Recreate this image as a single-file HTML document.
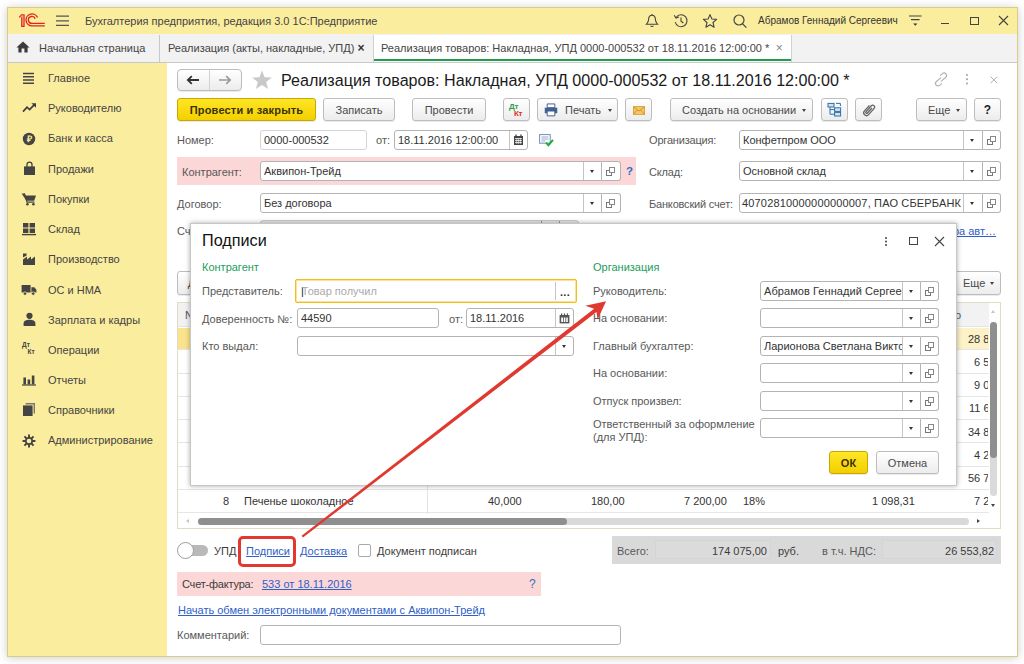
<!DOCTYPE html>
<html lang="ru"><head><meta charset="utf-8"><title>1С:Предприятие</title>
<style>
*{box-sizing:border-box;margin:0;padding:0}
html,body{width:1024px;height:664px;overflow:hidden;background:#fff}
body{font-family:"Liberation Sans",Arial,sans-serif;font-size:11px;color:#3c3c3c;position:relative}
.a{position:absolute;white-space:nowrap}
.t{position:absolute;white-space:nowrap;line-height:14px;height:14px}
#win{left:7px;top:7px;width:1011px;height:650px;border:1px solid #d9cd85;background:#fff;box-shadow:0 1px 9px rgba(0,0,0,.2)}
#titlebar{left:8px;top:8px;width:1009px;height:26px;background:#fbed9e}
#tabs{left:8px;top:34px;width:1009px;height:29px;background:#f2f2f2;border-bottom:1px solid #c8c8c8}
#side{left:8px;top:63px;width:159px;height:593px;background:#fbed9e}
.inp{position:absolute;background:#fff;border:1px solid #b4b4b4;border-radius:3px;height:20px;line-height:18px;padding-left:3px;white-space:nowrap;overflow:hidden;color:#333}
.btn{position:absolute;border:1px solid #bdbdbd;border-radius:3px;background:linear-gradient(#ffffff,#ececec);height:24px;line-height:22px;text-align:center;white-space:nowrap;box-shadow:0 1px 0 rgba(0,0,0,.08);color:#4a4a4a}
.ybtn{background:linear-gradient(#ffe626,#f3cf00);border-color:#c7a800;font-weight:bold;color:#3a3200}
.lnk{color:#2f60c8;text-decoration:underline}
.sb{position:absolute;left:40px;line-height:14px;white-space:nowrap;color:#444}
.dd{position:absolute;top:0;bottom:0;border-left:1px solid #c4c4c4;width:18px}
.dd:after{content:"";position:absolute;left:5.5px;top:8px;border:2.5px solid transparent;border-top:3px solid #333;border-bottom:0}
.ob{position:absolute;border:1px solid #b4b4b4;border-left:0;border-radius:0 3px 3px 0;background:#fff;width:19px;height:20px}
.ob:before{content:"";position:absolute;left:4px;top:8px;width:4px;height:4px;border:1px solid #777}
.ob i{position:absolute;left:7px;top:5px;width:6px;height:6px;border:1px solid #888;background:#fff}
.nr{border-radius:3px 0 0 3px}
.lb{color:#585858}
.num{position:absolute;white-space:nowrap;line-height:14px;height:14px;color:#333}
</style></head><body>
<div id="win" class="a"></div>
<div id="titlebar" class="a"></div>
<div id="tabs" class="a"></div>
<div id="side" class="a"></div>
<!-- title bar -->
<svg class="a" style="left:18px;top:13px" width="28" height="15" viewBox="0 0 28 15">
<path d="M1.2 4.4 L3.6 1.7 H6.1 V13.4 H3.7 V4.2" fill="#f2a47c" stroke="#e0261c" stroke-width="1.1"/>
<g fill="none" stroke="#e0261c" stroke-width="1.35">
<path d="M19.6 4.6 A6 6 0 1 0 14 12.9 H26.8"/>
<path d="M17.2 5.7 A3.5 3.5 0 1 0 14 10.4 H26.8"/>
</g></svg>
<svg class="a" style="left:56px;top:15px" width="14" height="12" viewBox="0 0 14 12"><g stroke="#555" stroke-width="1.2"><path d="M0 1.2H13M0 5.8H13M0 10.4H13"/></g></svg>
<div class="t" style="left:85px;top:14px;color:#444">Бухгалтерия предприятия, редакция 3.0 1С:Предприятие</div>
<!-- right icons -->
<svg class="a" style="left:644px;top:13px" width="16" height="16" viewBox="0 0 16 16"><g fill="none" stroke="#444" stroke-width="1.1"><path d="M8 2.2 C5.4 2.2 4.6 4.6 4.6 6.6 C4.6 9 3.2 10.2 2.4 11.2 H13.6 C12.8 10.2 11.4 9 11.4 6.6 C11.4 4.6 10.6 2.2 8 2.2Z"/><path d="M6.6 12.6 A1.5 1.5 0 0 0 9.4 12.6"/><path d="M8 1V2.2"/></g></svg>
<svg class="a" style="left:673px;top:13px" width="16" height="16" viewBox="0 0 16 16"><g fill="none" stroke="#444" stroke-width="1.1"><path d="M3.2 4.2 A6 6 0 1 1 2.2 9"/><path d="M8 4.6V8.2L10.4 10"/><path d="M1.2 2.2 L3 5 L6 4" /></g></svg>
<svg class="a" style="left:702px;top:13px" width="16" height="16" viewBox="0 0 16 16"><path fill="none" stroke="#444" stroke-width="1.1" stroke-linejoin="round" d="M8 1.6 L9.9 6 L14.6 6.4 L11 9.5 L12.1 14.2 L8 11.7 L3.9 14.2 L5 9.5 L1.4 6.4 L6.1 6Z"/></svg>
<svg class="a" style="left:732px;top:13px" width="16" height="16" viewBox="0 0 16 16"><g fill="none" stroke="#444" stroke-width="1.2"><circle cx="7" cy="7" r="5"/><path d="M10.6 10.8 L14.4 14.6"/></g></svg>
<div class="t" style="left:758px;top:14px;color:#333;font-size:10px">Абрамов Геннадий Сергеевич</div>
<svg class="a" style="left:908px;top:14px" width="15" height="14" viewBox="0 0 15 14"><g stroke="#444" stroke-width="1.1" fill="none"><path d="M1 2H13.6M3 5.6H11.6"/></g><path d="M5.2 9.4H9.4L7.3 11.8Z" fill="#333"/></svg>
<div class="a" style="left:941px;top:23px;width:8px;height:1px;background:#444"></div>
<div class="a" style="left:970px;top:17px;width:9px;height:8px;border:1px solid #444"></div>
<svg class="a" style="left:998px;top:15px" width="11" height="11" viewBox="0 0 11 11"><path d="M1 1L10 10M10 1L1 10" stroke="#444" stroke-width="1.1"/></svg>
<!-- tabs -->
<svg class="a" style="left:16px;top:41px" width="14" height="12" viewBox="0 0 14 12"><path d="M7 0.4 L0.4 6.4 H2.4 V11.4 H5.6 V7.6 H8.4 V11.4 H11.6 V6.4 H13.6Z" fill="#3b3b3b"/></svg>
<div class="t" style="left:39px;top:41px;color:#444">Начальная страница</div>
<div class="a" style="left:159px;top:35px;width:1px;height:27px;background:#c8c8c8"></div>
<div class="t" style="left:168px;top:41px;color:#444">Реализация (акты, накладные, УПД) <span style="font-size:12px;font-weight:bold;color:#333">×</span></div>
<div class="a" style="left:373px;top:35px;width:419px;height:27px;background:#fff;border-left:1px solid #d0d0d0;border-right:1px solid #d0d0d0"></div><div class="a" style="left:374px;top:59px;width:417px;height:2px;background:#1f9d4d"></div>
<div class="t" style="left:381px;top:41px;color:#444">Реализация товаров: Накладная, УПД 0000-000532 от 18.11.2016 12:00:00 * <span style="font-size:12px;color:#888">&nbsp;×</span></div>
<!-- sidebar -->
<div id="sidebar" class="a" style="left:8px;top:62px;width:158px;height:594px">
<svg class="a" style="left:14px;top:10px" width="14" height="14" viewBox="0 0 14 14"><path d="M1 1.6H12M1 4.8H12M1 8H12M1 11.2H12" stroke="#444" stroke-width="1.5"/></svg>
<div class="sb" style="top:9px">Главное</div>
<svg class="a" style="left:14px;top:40px" width="15" height="12" viewBox="0 0 15 12"><path d="M1 9.6 L5 5.2 L7.6 7.6 L12.4 2.6" fill="none" stroke="#3d3d3d" stroke-width="1.7"/><path d="M9.4 1.2H14V5.8Z" fill="#3d3d3d"/></svg>
<div class="sb" style="top:39px">Руководителю</div>
<svg class="a" style="left:14px;top:70px" width="14" height="14" viewBox="0 0 14 14"><circle cx="7" cy="7" r="6.2" fill="#444"/><text x="7" y="10.2" font-size="9" font-weight="bold" font-family="Liberation Sans, sans-serif" text-anchor="middle" fill="#fbed9e">₽</text></svg>
<div class="sb" style="top:69px">Банк и касса</div>
<svg class="a" style="left:15px;top:99px" width="13" height="15" viewBox="0 0 13 15"><path d="M1 5.4H12V14H1Z" fill="#444"/><path d="M4 7V3.6A2.5 2.5 0 0 1 9 3.6V7" fill="none" stroke="#444" stroke-width="1.3"/></svg>
<div class="sb" style="top:100px">Продажи</div>
<svg class="a" style="left:13px;top:130px" width="16" height="14" viewBox="0 0 16 14"><path d="M0.6 1.4H3.4L4.4 3.6H15L13.2 8.8H5.4Z" fill="#444"/><path d="M3.4 1.4L6 10.2H13.4" fill="none" stroke="#444" stroke-width="1.2"/><circle cx="6.4" cy="12.2" r="1.3" fill="#444"/><circle cx="12.4" cy="12.2" r="1.3" fill="#444"/></svg>
<div class="sb" style="top:130px">Покупки</div>
<svg class="a" style="left:14px;top:160px" width="14" height="14" viewBox="0 0 14 14"><path d="M1 1H6.4V5.4H1ZM7.6 1H13V5.4H7.6ZM1 6.6H6.4V11H1ZM7.6 6.6H13V11H7.6Z" fill="#444"/><path d="M0 12.6H14" stroke="#444" stroke-width="1.4"/></svg>
<div class="sb" style="top:160px">Склад</div>
<svg class="a" style="left:14px;top:190px" width="14" height="14" viewBox="0 0 14 14"><path d="M1 13V7.4L5 4.6V7.4L9 4.6V7.4L13 4.6V13Z" fill="#444"/><path d="M1 5.6V1.4H4.6V3.4Z" fill="#444"/></svg>
<div class="sb" style="top:190px">Производство</div>
<svg class="a" style="left:13px;top:222px" width="16" height="12" viewBox="0 0 16 12"><path d="M0.6 1H9.6V8.6H0.6ZM10.4 3.2H13.4L15.4 5.8V8.6H10.4Z" fill="#444"/><circle cx="4" cy="9.6" r="1.7" fill="#444" stroke="#fbed9e" stroke-width=".7"/><circle cx="12.2" cy="9.6" r="1.7" fill="#444" stroke="#fbed9e" stroke-width=".7"/></svg>
<div class="sb" style="top:221px">ОС и НМА</div>
<svg class="a" style="left:15px;top:250px" width="13" height="15" viewBox="0 0 13 15"><circle cx="6.5" cy="3.8" r="3.1" fill="#444"/><path d="M0.6 14V11.4C0.6 8.8 3.4 7.8 6.5 7.8S12.4 8.8 12.4 11.4V14Z" fill="#444"/></svg>
<div class="sb" style="top:251px">Зарплата и кадры</div>
<div class="a" style="left:14px;top:279px;font-size:6.5px;font-weight:bold;line-height:7px;color:#444">Дт<br>&nbsp;&nbsp;&nbsp;Кт</div>
<div class="sb" style="top:281px">Операции</div>
<svg class="a" style="left:14px;top:312px" width="14" height="12" viewBox="0 0 14 12"><path d="M1.4 3.4H4V10.4H1.4ZM5.6 5.4H8.2V10.4H5.6ZM9.8 1.4H12.4V10.4H9.8Z" fill="#444"/><path d="M0 11H14" stroke="#444" stroke-width="1.2"/></svg>
<div class="sb" style="top:311px">Отчеты</div>
<svg class="a" style="left:14px;top:340px" width="14" height="15" viewBox="0 0 14 15"><path d="M3.6 1H13V11.4H11.6V2.4H3.6Z" fill="#777"/><path d="M1 3.4H10.6V14H1Z" fill="#444"/></svg>
<div class="sb" style="top:341px">Справочники</div>
<svg class="a" style="left:14px;top:372px" width="14" height="14" viewBox="0 0 15 15"><g stroke="#444" stroke-width="2.1"><path d="M7.5 0.6V14.4M0.6 7.5H14.4M2.6 2.6L12.4 12.4M12.4 2.6L2.6 12.4"/></g><circle cx="7.5" cy="7.5" r="4.3" fill="#444"/><circle cx="7.5" cy="7.5" r="2.5" fill="#fbed9e"/></svg>
<div class="sb" style="top:371px">Администрирование</div>
</div>
<!-- header row -->
<div class="btn" style="left:177px;top:69px;width:65px;height:22px;border-radius:4px"></div>
<div class="a" style="left:209px;top:70px;width:1px;height:20px;background:#d2d2d2"></div>
<svg class="a" style="left:186px;top:75px" width="14" height="10" viewBox="0 0 14 10"><path d="M13 5H2.5M5.8 1.2L1.8 5L5.8 8.8" fill="none" stroke="#333" stroke-width="1.8"/></svg>
<svg class="a" style="left:218px;top:75px" width="14" height="10" viewBox="0 0 14 10"><path d="M1 5H11.5M8.2 1.2L12.2 5L8.2 8.8" fill="none" stroke="#999" stroke-width="1.6"/></svg>
<svg class="a" style="left:251px;top:70px" width="22" height="20" viewBox="0 0 22 20"><path d="M11 0.6 L13.6 7.2 L20.8 7.6 L15.2 12.1 L17.1 19 L11 15.1 L4.9 19 L6.8 12.1 L1.2 7.6 L8.4 7.2Z" fill="#c9c9c9"/></svg>
<div class="a" style="left:281px;top:69px;font-size:16.13px;line-height:22px;color:#1a1a1a">Реализация товаров: Накладная, УПД 0000-000532 от 18.11.2016 12:00:00 *</div>
<svg class="a" style="left:933px;top:72px" width="16" height="15" viewBox="0 0 16 15"><g fill="none" stroke="#b2b2b2" stroke-width="1.15" stroke-linecap="round" transform="rotate(-40 8 7.5)"><path d="M8.8 6.1 H3.2 A2.5 2.5 0 0 0 3.2 11.1 H5.6"/><path d="M7.2 8.9 H12.8 A2.5 2.5 0 0 0 12.8 3.9 H10.4"/></g></svg>
<div class="a" style="left:966px;top:73.5px;width:2.4px;height:2.4px;border-radius:50%;background:#a0a0a0;box-shadow:0 4.3px 0 #a0a0a0,0 8.6px 0 #a0a0a0"></div>
<svg class="a" style="left:990px;top:76px" width="8" height="8" viewBox="0 0 8 8"><path d="M0.6 0.6L7.2 7.2M7.2 0.6L0.6 7.2" stroke="#b0b0b0" stroke-width="1"/></svg>
<!-- toolbar -->
<div class="btn ybtn" style="left:177px;top:98px;width:139px;height:23px;line-height:22px;letter-spacing:.18px">Провести и закрыть</div>
<div class="btn" style="left:323px;top:98px;width:72px;height:23px;line-height:22px">Записать</div>
<div class="btn" style="left:412px;top:98px;width:74px;height:23px;line-height:22px">Провести</div>
<div class="btn" style="left:503px;top:98px;width:27px;height:23px"></div>
<div class="a" style="left:509px;top:103px;font-size:8px;font-weight:bold;line-height:8px;color:#2e9e4a;letter-spacing:-.3px">Дт</div>
<div class="a" style="left:514px;top:110px;font-size:8px;font-weight:bold;line-height:8px;color:#e0322a;letter-spacing:-.3px">Кт</div>
<div class="btn" style="left:537px;top:98px;width:81px;height:23px;line-height:22px;text-align:left;padding-left:27px">Печать</div>
<svg class="a" style="left:544px;top:103px" width="14" height="14" viewBox="0 0 15 15"><path d="M3.4 1H11.6V5H3.4Z" fill="#fff" stroke="#3a5a8c" stroke-width="1"/><path d="M0.8 5H14.2V11H0.8Z" fill="#3f6294"/><path d="M3.4 8.6H11.6V13.8H3.4Z" fill="#fff" stroke="#3a5a8c" stroke-width="1"/></svg>
<div class="a" style="left:608px;top:109px;border:2.5px solid transparent;border-top:3px solid #444;border-bottom:0"></div>
<div class="btn" style="left:625px;top:98px;width:27px;height:23px"></div>
<svg class="a" style="left:633px;top:106px" width="12" height="9" viewBox="0 0 14 10"><rect x="0.5" y="0.5" width="13" height="9" fill="#f6c667" stroke="#d99a2b"/><path d="M0.8 0.8L7 5.6L13.2 0.8M0.8 9.2L5 4.4M13.2 9.2L9 4.4" fill="none" stroke="#c98718" stroke-width=".9"/></svg>
<div class="btn" style="left:670px;top:98px;width:143px;height:23px;line-height:22px;text-align:left;padding-left:11px">Создать на основании</div>
<div class="a" style="left:802px;top:109px;border:2.5px solid transparent;border-top:3px solid #444;border-bottom:0"></div>
<div class="btn" style="left:821px;top:98px;width:27px;height:23px"></div>
<svg class="a" style="left:827px;top:102px" width="15" height="15" viewBox="0 0 15 15"><g fill="#cfe3f3" stroke="#2f6fa8" stroke-width="1"><rect x="1" y="1.4" width="6" height="3.6"/><rect x="7.6" y="5.8" width="6" height="3.6"/><rect x="7.6" y="10.4" width="6" height="3.6"/></g><path d="M3 5V12.2H7.6M3 7.6H7.6M9 1.4H13.4V4" fill="none" stroke="#2f6fa8" stroke-width="1"/></svg>
<div class="btn" style="left:855px;top:98px;width:27px;height:23px"></div>
<svg class="a" style="left:859.5px;top:101px" width="18" height="18" viewBox="0 0 15 15"><g transform="rotate(42 7.5 7.5)"><path d="M5.2 4.4V10.6A2.3 2.3 0 0 0 9.8 10.6V3.6A1.6 1.6 0 0 0 6.6 3.6V10.2A.8 .8 0 0 0 8.2 10.2V4.6" fill="none" stroke="#666" stroke-width="1.1"/></g></svg>
<div class="btn" style="left:916px;top:98px;width:51px;height:23px;line-height:22px;text-align:left;padding-left:11px">Еще</div>
<div class="a" style="left:956px;top:109px;border:2.5px solid transparent;border-top:3px solid #444;border-bottom:0"></div>
<div class="btn" style="left:974px;top:98px;width:27px;height:23px;line-height:22px;font-weight:bold;font-size:12px;color:#222">?</div>
<!-- form rows -->
<div class="t lb" style="left:177px;top:133px">Номер:</div>
<div class="inp" style="left:260px;top:130px;width:107px;border-color:#d6d6d6">0000-000532</div>
<div class="t lb" style="left:376px;top:133px">от:</div>
<div class="inp" style="left:394px;top:130px;width:134px">18.11.2016 12:00:00</div>
<div class="a" style="left:509px;top:131px;width:1px;height:18px;background:#c4c4c4"></div>
<svg class="a" style="left:513px;top:134px" width="11" height="12" viewBox="0 0 11 12"><path d="M1 2H10V11H1Z" fill="#444"/><path d="M3 0.6V3M8 0.6V3" stroke="#444" stroke-width="1.3"/><path d="M2 4.6H9M2 6.6H9M2 8.6H9" stroke="#fff" stroke-width=".8"/><path d="M3.8 4V10M5.6 4V10M7.4 4V10" stroke="#fff" stroke-width=".6"/></svg>
<svg class="a" style="left:539px;top:134px" width="15" height="13" viewBox="0 0 15 13"><rect x="0.6" y="0.6" width="10.6" height="8.6" fill="#fff" stroke="#6f8fb5" stroke-width="1"/><path d="M2.4 3H9.4M2.4 5H9.4M2.4 7H6.4" stroke="#8aa3c2" stroke-width=".9"/><path d="M7 8.6L9.4 11.2L14 5.8" fill="none" stroke="#24a83c" stroke-width="2"/></svg>
<div class="t lb" style="left:649px;top:133px;letter-spacing:-.18px">Организация:</div>
<div class="inp nr" style="left:739px;top:130px;width:244px">Конфетпром ООО<div class="dd" style="left:223px"></div></div>
<div class="ob" style="left:983px;width:18px;top:130px"><i></i></div>

<div class="a" style="left:177px;top:157px;width:459px;height:28px;background:#fbd7d7"></div>
<div class="t lb" style="left:182px;top:165px">Контрагент:</div>
<div class="inp nr" style="left:260px;top:161px;width:342px">Аквипон-Трейд<div class="dd" style="left:322px"></div></div>
<div class="ob" style="left:602px;top:161px"><i></i></div>
<div class="t" style="left:626px;top:164px;font-weight:bold;color:#2f6fc4;font-size:11.5px">?</div>
<div class="t lb" style="left:649px;top:165px;letter-spacing:-.18px">Склад:</div>
<div class="inp nr" style="left:739px;top:161px;width:244px">Основной склад<div class="dd" style="left:223px"></div></div>
<div class="ob" style="left:983px;width:18px;top:161px"><i></i></div>

<div class="t lb" style="left:177px;top:197px">Договор:</div>
<div class="inp nr" style="left:260px;top:193px;width:342px">Без договора<div class="dd" style="left:322px"></div></div>
<div class="ob" style="left:602px;top:193px"><i></i></div>
<div class="t lb" style="left:649px;top:197px;letter-spacing:-.18px">Банковский счет:</div>
<div class="inp nr" style="left:739px;top:193px;width:244px;padding-left:2px;letter-spacing:.165px">40702810000000000007, ПАО СБЕРБАНК<div class="dd" style="left:223px;background:#fff"></div></div>
<div class="ob" style="left:983px;width:18px;top:193px"><i></i></div>

<div class="t lb" style="left:177px;top:224px">Счет на оплату:</div>
<div class="inp" style="left:260px;top:220px;width:319px;background:#e6e6e6;border-color:#c9c9c9"></div><div class="a" style="left:541px;top:221px;width:1px;height:3px;background:#9a9a9a"></div><div class="a" style="left:559px;top:221px;width:1px;height:3px;background:#9a9a9a"></div>
<div class="t lnk" style="right:28px;top:224px">Заполнить по счетам-фактура авт…</div>
<!-- table area -->
<div class="btn" style="left:177px;top:271px;width:70px;height:24px;line-height:22px">Добавить</div>
<div class="btn" style="left:950px;top:271px;width:51px;height:24px;line-height:22px;text-align:left;padding-left:12px">Еще</div>
<div class="a" style="left:990px;top:282px;border:2.5px solid transparent;border-top:3px solid #444;border-bottom:0"></div>
<div id="tbl" class="a" style="left:177px;top:302px;width:824px;height:227px;border:1px solid #e2dcc2;background:#fff;overflow:hidden">
 <div class="a" style="left:0;top:0;width:811px;height:24px;background:#f2f2f2;border-bottom:1px solid #e3e3e3"></div>
 <div class="t" style="left:7px;top:5px;color:#555">N</div>
 <div class="t" style="left:777px;top:5px;color:#555">о</div>
 <div class="a" style="left:0;top:25px;width:811px;height:21px;background:#fdf1c7"></div><div class="a" style="left:0;top:25px;width:40px;height:21px;background:#fbe38d"></div>
 <div class="a" style="left:0;top:46px;width:811px;height:1px;background:#e6e6e6"></div>
 <div class="a" style="left:0;top:70px;width:811px;height:1px;background:#e6e6e6"></div>
 <div class="a" style="left:0;top:93px;width:811px;height:1px;background:#e6e6e6"></div>
 <div class="a" style="left:0;top:116px;width:811px;height:1px;background:#e6e6e6"></div>
 <div class="a" style="left:0;top:139px;width:811px;height:1px;background:#e6e6e6"></div>
 <div class="a" style="left:0;top:163px;width:811px;height:1px;background:#e6e6e6"></div>
 <div class="a" style="left:0;top:186px;width:811px;height:1px;background:#e6e6e6"></div>
 <div class="a" style="left:0;top:209px;width:811px;height:1px;background:#e6e6e6"></div>
 <div class="a" style="left:249px;top:0;width:1px;height:211px;background:#e3e3e3"></div>
 <div class="a" style="left:0;top:0;width:810px;height:226px;overflow:hidden">
  <div class="num" style="left:790px;top:29px">28 813,56</div>
  <div class="num" style="left:796px;top:52px">6 525,00</div>
  <div class="num" style="left:796px;top:75px">9 000,00</div>
  <div class="num" style="left:791px;top:98px">11 600,00</div>
  <div class="num" style="left:790px;top:122px">34 800,00</div>
  <div class="num" style="left:796px;top:145px">4 250,00</div>
  <div class="num" style="left:790px;top:168px">56 700,00</div>
  <div class="num" style="left:796px;top:191px">7 200,00</div>
 </div>
 <div class="num" style="left:45px;top:191px">8</div>
 <div class="num" style="left:66px;top:191px">Печенье шоколадное</div>
 <div class="num" style="left:310px;top:191px">40,000</div>
 <div class="num" style="left:413px;top:191px">180,00</div>
 <div class="num" style="left:506px;top:191px">7 200,00</div>
 <div class="num" style="left:565px;top:191px">18%</div>
 <div class="num" style="left:694px;top:191px">1 098,31</div>
 <!-- v scroll -->
 <div class="a" style="left:811px;top:0;width:12px;height:211px;background:#fff"></div>
 <div class="a" style="left:813px;top:7px;border:2.5px solid transparent;border-bottom:3.5px solid #c4c4c4;border-top:0"></div>
 <div class="a" style="left:812px;top:19px;width:7px;height:174px;border-radius:4px;background:#dadada"></div>
 <div class="a" style="left:812px;top:19px;width:7px;height:136px;border-radius:4px;background:#8f8f8f"></div>
 <div class="a" style="left:813px;top:201px;border:2.5px solid transparent;border-top:3.5px solid #444;border-bottom:0"></div>
 <!-- h scroll -->
 <div class="a" style="left:8px;top:216px;border:2.5px solid transparent;border-right:3.5px solid #c4c4c4;border-left:0"></div>
 <div class="a" style="left:20px;top:215px;width:771px;height:7px;border-radius:4px;background:#d9d9d9"></div>
 <div class="a" style="left:20px;top:215px;width:369px;height:7px;border-radius:4px;background:#8f8f8f"></div>
 <div class="a" style="left:799px;top:216px;border:2.5px solid transparent;border-left:3.5px solid #444;border-right:0"></div>
</div>
<!-- footer -->
<div class="a" style="left:184px;top:545px;width:24px;height:11px;border-radius:6px;background:#b9b9b9"></div>
<div class="a" style="left:177px;top:542px;width:17px;height:17px;border-radius:50%;background:#fff;border:1px solid #9d9d9d"></div>
<div class="t" style="left:214px;top:544px">УПД</div>
<div class="t lnk" style="left:246px;top:544px">Подписи</div>
<div class="t lnk" style="left:300px;top:544px">Доставка</div>
<div class="a" style="left:358px;top:544px;width:13px;height:13px;border:1px solid #a9a9a9;border-radius:2px;background:#fff"></div>
<div class="t" style="left:377px;top:544px">Документ подписан</div>
<div class="a" style="left:612px;top:536px;width:389px;height:28px;background:#d9d9d9"></div>
<div class="a" style="left:655px;top:540px;width:116px;height:19px;border:1px solid #d4d4d4;border-radius:2px;background:#dbdbdb"></div>
<div class="a" style="left:882px;top:540px;width:115px;height:19px;border:1px solid #d4d4d4;border-radius:2px;background:#dbdbdb"></div>
<div class="t lb" style="left:617px;top:544px">Всего:</div>
<div class="t" style="left:667px;top:544px;width:100px;text-align:right">174 075,00</div>
<div class="t" style="left:778px;top:544px">руб.</div>
<div class="t lb" style="left:822px;top:544px">в т.ч. НДС:</div>
<div class="t" style="left:894px;top:544px;width:100px;text-align:right">26 553,82</div>
<div class="a" style="left:177px;top:572px;width:364px;height:24px;background:#fbd7d7"></div>
<div class="t" style="left:182px;top:577px;letter-spacing:-.2px">Счет-фактура:</div>
<div class="t lnk" style="left:262px;top:577px">533 от 18.11.2016</div>
<div class="t" style="left:529px;top:577px;color:#2f6fc4;font-size:12px">?</div>
<div class="t lnk" style="left:178px;top:603px">Начать обмен электронными документами с Аквипон-Трейд</div>
<div class="t lb" style="left:177px;top:628px">Комментарий:</div>
<div class="inp" style="left:260px;top:625px;width:361px;height:20px"></div>
<!-- dialog -->
<div id="dlg" class="a" style="left:190px;top:223px;width:767px;height:263px;background:#fff;border:1px solid #c6c6c6;box-shadow:0 0 5px rgba(0,0,0,.33)"></div>
<div class="a" style="left:202px;top:229px;font-size:16.2px;line-height:22px;color:#111">Подписи</div>
<div class="a" style="left:885px;top:237px;width:2px;height:2px;border-radius:1px;background:#444;box-shadow:0 3.5px 0 #444,0 7px 0 #444"></div>
<div class="a" style="left:909px;top:237px;width:9px;height:8px;border:1px solid #444"></div>
<svg class="a" style="left:934px;top:236px" width="11" height="11" viewBox="0 0 11 11"><path d="M1 1L10 10M10 1L1 10" stroke="#444" stroke-width="1.1"/></svg>
<div class="t" style="left:202px;top:260px;color:#1c9c5a">Контрагент</div>
<div class="t" style="left:593px;top:260px;color:#1c9c5a">Организация</div>
<!-- left col -->
<div class="t lb" style="left:202px;top:284px">Представитель:</div>
<div class="inp" style="left:295px;top:279px;width:282px;height:24px;line-height:20px;border:1px solid #f3bd1a;box-shadow:inset 0 0 0 1px #fbe29a;border-radius:2px;color:#aaa;padding-left:5px;line-height:22px"><span style="color:#222;margin-right:-2px">|</span>Товар получил</div>
<div class="a" style="left:555px;top:282px;width:1px;height:18px;background:#c4c4c4"></div>
<div class="t" style="left:560px;top:285px;color:#333;font-weight:bold;letter-spacing:.3px">...</div>
<div class="t lb" style="left:202px;top:312px">Доверенность №:</div>
<div class="inp" style="left:297px;top:308px;width:142px">44590</div>
<div class="t lb" style="left:449px;top:312px">от:</div>
<div class="inp" style="left:466px;top:308px;width:108px">18.11.2016</div>
<div class="a" style="left:555px;top:309px;width:1px;height:18px;background:#c4c4c4"></div>
<svg class="a" style="left:559px;top:313px" width="11" height="11" viewBox="0 0 11 11"><path d="M0.6 2H10.4V10.4H0.6Z" fill="#555"/><path d="M2.6 0.6V3M5.5 0.6V3M8.4 0.6V3" stroke="#555" stroke-width="1.2"/><path d="M2.2 4.4H4V9H2.2ZM4.8 4.4H6.4V9H4.8ZM7.2 4.4H8.8V9H7.2Z" fill="#fff"/></svg>
<div class="t lb" style="left:202px;top:339px">Кто выдал:</div>
<div class="inp" style="left:297px;top:336px;width:277px"><div class="dd" style="left:257px"></div></div>
<!-- right col -->
<div class="t lb" style="left:593px;top:284px">Руководитель:</div>
<div class="inp nr" style="left:760px;top:281px;width:161px;letter-spacing:.07px">Абрамов Геннадий Сергеевич<div class="dd" style="left:141px;background:#fff"></div></div>
<div class="ob" style="left:921px;top:281px;width:18px"><i></i></div>
<div class="t lb" style="left:593px;top:311px">На основании:</div>
<div class="inp nr" style="left:760px;top:308px;width:161px"><div class="dd" style="left:141px"></div></div>
<div class="ob" style="left:921px;top:308px;width:18px"><i></i></div>
<div class="t lb" style="left:593px;top:339px">Главный бухгалтер:</div>
<div class="inp nr" style="left:760px;top:336px;width:161px">Ларионова Светлана Викторовна<div class="dd" style="left:141px;background:#fff"></div></div>
<div class="ob" style="left:921px;top:336px;width:18px"><i></i></div>
<div class="t lb" style="left:593px;top:366px">На основании:</div>
<div class="inp nr" style="left:760px;top:363px;width:161px"><div class="dd" style="left:141px"></div></div>
<div class="ob" style="left:921px;top:363px;width:18px"><i></i></div>
<div class="t lb" style="left:593px;top:394px">Отпуск произвел:</div>
<div class="inp nr" style="left:760px;top:391px;width:161px"><div class="dd" style="left:141px"></div></div>
<div class="ob" style="left:921px;top:391px;width:18px"><i></i></div>
<div class="t lb" style="left:593px;top:418px;line-height:12.5px;height:auto;white-space:normal;width:170px">Ответственный за оформление (для УПД):</div>
<div class="inp nr" style="left:760px;top:418px;width:161px"><div class="dd" style="left:141px"></div></div>
<div class="ob" style="left:921px;top:418px;width:18px"><i></i></div>
<div class="btn ybtn" style="left:829px;top:451px;width:39px;height:23px;line-height:22px">ОК</div>
<div class="btn" style="left:876px;top:451px;width:63px;height:23px;line-height:22px">Отмена</div>
<!-- annotations -->
<div class="a" style="left:238px;top:536px;width:58px;height:31px;border:3px solid #e03a30;border-radius:5px"></div>
<svg class="a" style="left:0;top:0" width="1024" height="664" viewBox="0 0 1024 664"><path d="M301.6 535.8 L594.1 308.7 L585.3 305.8 L606.1 301.2 L597.5 319.8 L596.5 311.9 L303 537.6Z" fill="#e03a30"/></svg>
</body></html>
